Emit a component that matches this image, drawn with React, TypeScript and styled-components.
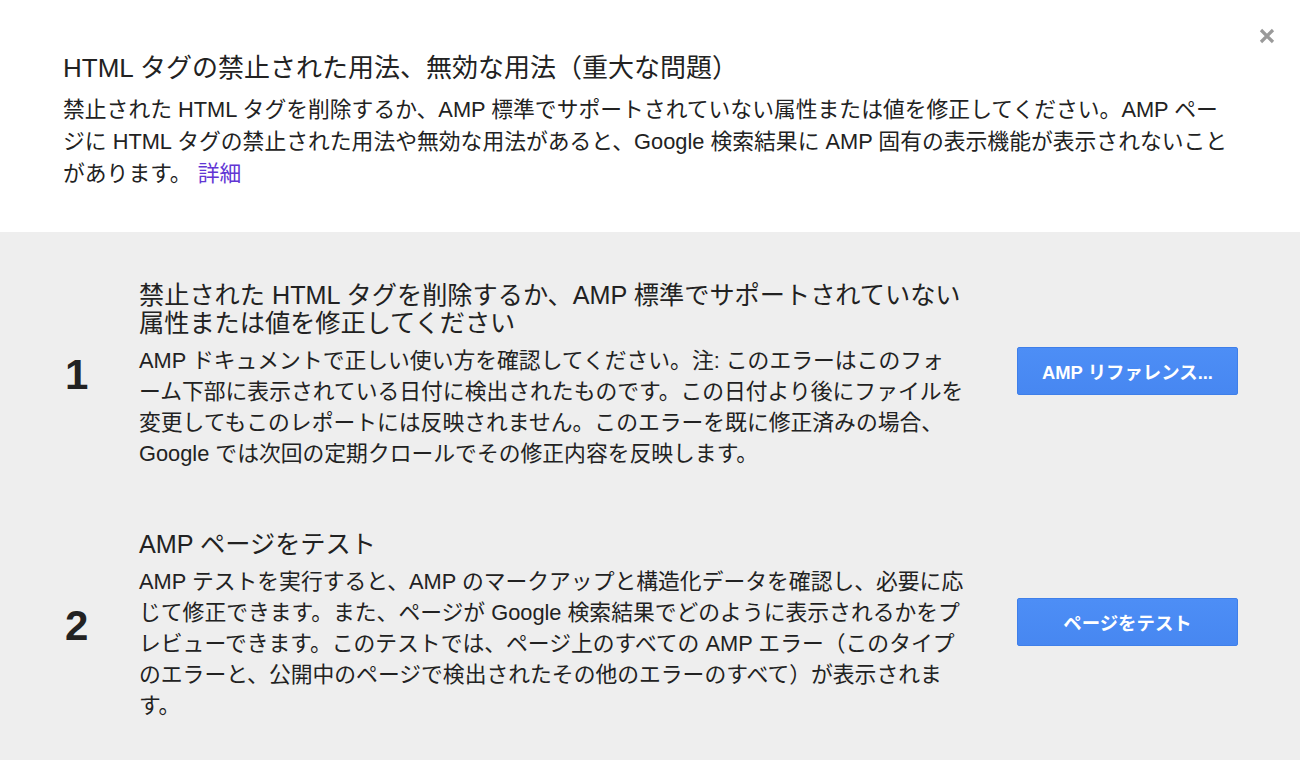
import styled, { createGlobalStyle } from "styled-components"

const GlobalStyle = createGlobalStyle`
  html, body {
    margin: 0;
    padding: 0;
    background: #eeeeee;
  }
  body {
    font-family: "Liberation Sans", "Noto Sans CJK JP", sans-serif;
    color: #222222;
  }
`

type Step = {
  number: string
  title: string[]
  body: string[]
  action: string
}

const steps: Step[] = [
  {
    number: "1",
    title: [
      "禁止された HTML タグを削除するか、AMP 標準でサポートされていない",
      "属性または値を修正してください",
    ],
    body: [
      "AMP ドキュメントで正しい使い方を確認してください。注: このエラーはこのフォ",
      "ーム下部に表示されている日付に検出されたものです。この日付より後にファイルを",
      "変更してもこのレポートには反映されません。このエラーを既に修正済みの場合、",
      "Google では次回の定期クロールでその修正内容を反映します。",
    ],
    action: "AMP リファレンス...",
  },
  {
    number: "2",
    title: ["AMP ページをテスト"],
    body: [
      "AMP テストを実行すると、AMP のマークアップと構造化データを確認し、必要に応",
      "じて修正できます。また、ページが Google 検索結果でどのように表示されるかをプ",
      "レビューできます。このテストでは、ページ上のすべての AMP エラー（このタイプ",
      "のエラーと、公開中のページで検出されたその他のエラーのすべて）が表示されま",
      "す。",
    ],
    action: "ページをテスト",
  },
]

const App = () => {
  return (
    <>
      <GlobalStyle />
      <Dialog>
        <Header>
          <CloseButton aria-label="閉じる">
            <svg width="18" height="18" viewBox="0 0 18 18">
              <path d="M3 3 L15 15 M15 3 L3 15" stroke="#9a9a9a" strokeWidth="3.2" strokeLinecap="butt" />
            </svg>
          </CloseButton>
          <Title>HTML タグの禁止された用法、無効な用法（重大な問題）</Title>
          <Description>
            <Line>禁止された HTML タグを削除するか、AMP 標準でサポートされていない属性または値を修正してください。AMP ペー</Line>
            <Line>ジに HTML タグの禁止された用法や無効な用法があると、Google 検索結果に AMP 固有の表示機能が表示されないこと</Line>
            <Line>
              があります。 <MoreLink href="#">詳細</MoreLink>
            </Line>
          </Description>
        </Header>
        <Steps>
          {steps.map((step) => (
            <StepRow key={step.number}>
              <StepNumber>{step.number}</StepNumber>
              <StepText>
                <StepTitle>
                  {step.title.map((line, key) => (
                    <Line key={key}>{line}</Line>
                  ))}
                </StepTitle>
                <StepBody>
                  {step.body.map((line, key) => (
                    <Line key={key}>{line}</Line>
                  ))}
                </StepBody>
              </StepText>
              <ActionButton>{step.action}</ActionButton>
            </StepRow>
          ))}
        </Steps>
      </Dialog>
    </>
  )
}

const Dialog = styled.div`
  width: 1300px;
  height: 760px;
  overflow: hidden;
  display: flex;
  flex-direction: column;
  background: #eeeeee;
`

const Header = styled.div`
  position: relative;
  background: #ffffff;
  height: 232px;
  box-sizing: border-box;
  padding: 50px 0 0 63px;
  flex-shrink: 0;
`

const CloseButton = styled.button`
  position: absolute;
  top: 27px;
  right: 24px;
  width: 18px;
  height: 18px;
  padding: 0;
  border: none;
  background: none;
  cursor: pointer;
  display: flex;
`

const Title = styled.h1`
  margin: 0;
  font-size: 26px;
  line-height: 36px;
  font-weight: normal;
  color: #222222;
  white-space: nowrap;
`

const Description = styled.div`
  margin-top: 8px;
  font-size: 21.8px;
  line-height: 32px;
  color: #222222;
`

const Line = styled.span`
  display: block;
  white-space: nowrap;
`

const MoreLink = styled.a`
  color: #6236d4;
  text-decoration: none;
`

const Steps = styled.div`
  display: flex;
  flex-direction: column;
  gap: 61px;
  padding: 49px 0 0 63px;
`

const StepRow = styled.div`
  display: grid;
  grid-template-columns: 76px 835px 221px;
  align-items: center;
`

const StepNumber = styled.div`
  font-size: 42px;
  font-weight: bold;
  color: #222222;
  padding-left: 2px;
`

const StepText = styled.div`
  display: flex;
  flex-direction: column;
  gap: 8px;
`

const StepTitle = styled.div`
  font-size: 25.2px;
  line-height: 28px;
  color: #222222;
`

const StepBody = styled.div`
  font-size: 21.8px;
  line-height: 31px;
  color: #222222;
`

const ActionButton = styled.button`
  margin-left: 43px;
  margin-bottom: 8px;
  width: 221px;
  height: 48px;
  border: 1px solid #3f7fe9;
  border-radius: 2px;
  background: linear-gradient(#4d8ef6, #4787f1);
  color: #ffffff;
  font-family: "Liberation Sans", "Noto Sans CJK JP", sans-serif;
  font-size: 18.4px;
  font-weight: bold;
  cursor: pointer;
`

export default App
